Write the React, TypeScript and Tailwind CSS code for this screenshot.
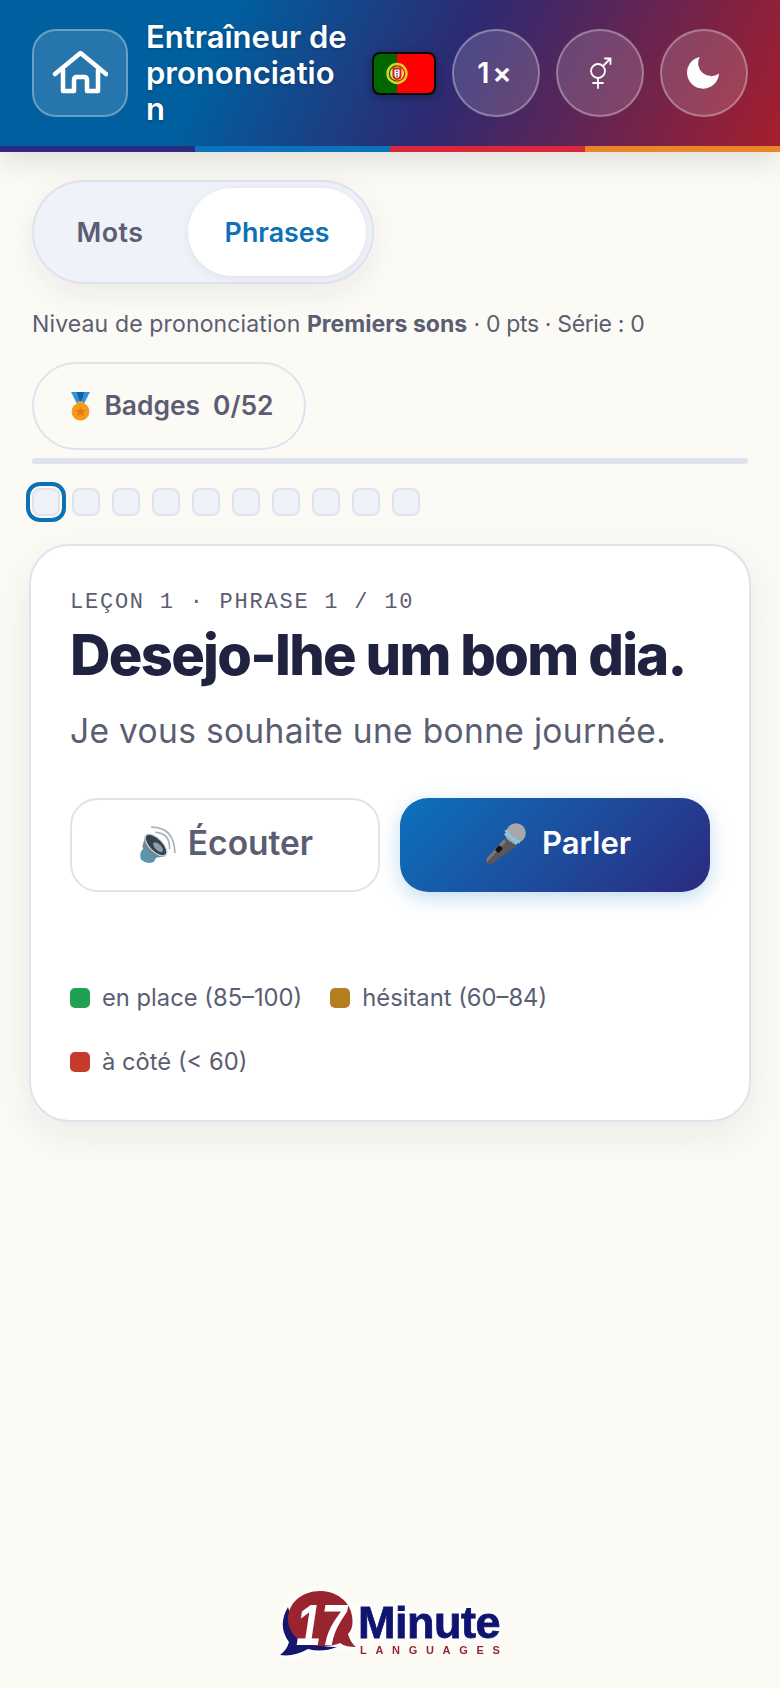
import React from "react";

const FONT = { fontFamily: "Inter, 'Noto Sans', sans-serif" };

// small round header button
const RoundBtn: React.FC<{ children: React.ReactNode }> = ({ children }) => (
  <button className="flex h-[88px] w-[88px] shrink-0 items-center justify-center rounded-full border-2 border-white/30 bg-white/15 text-white">
    {children}
  </button>
);

const HomeIcon = () => (
  <svg width="56" height="46" viewBox="0 0 56 46" fill="none" stroke="white" strokeWidth="4.5" strokeLinecap="round" strokeLinejoin="round">
    <path d="M3 24 L28.5 3 L54 24" />
    <path d="M11 20 V41 H22 V30 Q22 27 25 27 H32 Q35 27 35 30 V41 H46 V20" />
  </svg>
);

const Flag = () => (
  <svg width="64" height="43" viewBox="0 0 64 43" className="shrink-0 drop-shadow-[0_2px_4px_rgba(0,0,0,0.35)]">
    <defs>
      <clipPath id="flagClip">
        <rect x="1" y="1" width="62" height="41" rx="7" />
      </clipPath>
    </defs>
    <g clipPath="url(#flagClip)">
      <rect width="25" height="43" fill="#006600" />
      <rect x="25" width="39" height="43" fill="#ff0000" />
      <circle cx="25" cy="21.5" r="9.5" fill="none" stroke="#d8d42e" strokeWidth="2.4" />
      <circle cx="25" cy="21.5" r="7" fill="#e9e25a" />
      <path d="M20.5 15.5 H29.5 V23.5 Q29.5 27.5 25 28 Q20.5 27.5 20.5 23.5 Z" fill="#d81e1e" />
      <path d="M22.5 17.5 H27.5 V23.5 Q27.5 25.5 25 26 Q22.5 25.5 22.5 23.5 Z" fill="#ffffff" />
      <rect x="24.2" y="18.5" width="1.6" height="1.6" fill="#2a4fa8" />
      <rect x="24.2" y="21" width="1.6" height="1.6" fill="#2a4fa8" />
      <rect x="24.2" y="23.5" width="1.6" height="1.6" fill="#2a4fa8" />
    </g>
    <rect x="1" y="1" width="62" height="41" rx="7" fill="none" stroke="#0a0a0a" strokeWidth="2" />
  </svg>
);

const Moon = () => (
  <svg width="34" height="34" viewBox="0 0 34 34" fill="white">
    <path d="M12.7 1 A16 16 0 1 0 32 17.5 A13 13 0 0 1 12.7 1 Z" />
  </svg>
);

const VenusMars = () => (
  <svg width="24" height="32" viewBox="0 0 24 32" fill="none" stroke="white" strokeWidth="1.8" strokeLinecap="round">
    <circle cx="10" cy="14" r="7" />
    <path d="M10 21 V31 M5 26 H15" />
    <path d="M15 9 L22.5 1.5 M17 1.5 H22.5 V7" />
  </svg>
);

// emoji look-alikes
const Medal = () => (
  <svg width="23" height="30" viewBox="0 0 24 32" className="shrink-0">
    <path d="M2 1 H9 L12 8 L15 1 H22 L15.5 14 H8.5 Z" fill="#2f8fd8" />
    <path d="M8 1 H16 L13 11 H11 Z" fill="#155f9f" />
    <rect x="9" y="11" width="6" height="4" fill="#d8b04a" />
    <circle cx="12" cy="22" r="9.5" fill="#f59a1a" />
    <path d="M12 16.5 L13.6 20.2 L17.5 20.5 L14.5 23 L15.5 26.8 L12 24.8 L8.5 26.8 L9.5 23 L6.5 20.5 L10.4 20.2 Z" fill="#e37a10" />
  </svg>
);

const Speaker = () => (
  <svg width="40" height="40" viewBox="9 12 38 38" fill="none" className="shrink-0">
    <path d="M18 30 L29 40 L25 47 Q18 50 13 45 Q11 41 13 37 Z" fill="#5b96aa" />
    <path d="M17 22 L36 42 L26 43 L14 33 Z" fill="#6a8a98" />
    <ellipse cx="27" cy="31" rx="14" ry="6.8" transform="rotate(45 27 31)" fill="#c9d2d6" />
    <ellipse cx="27" cy="31" rx="12.5" ry="5.6" transform="rotate(45 27 31)" fill="#34444f" />
    <ellipse cx="29" cy="33" rx="6" ry="2.8" transform="rotate(45 29 33)" fill="#8da0aa" />
    <path d="M23 14 Q44 14 45 38" stroke="#aeb2b5" strokeWidth="1.6" strokeLinecap="round" />
    <path d="M27 19 Q40 20 40 34" stroke="#aeb2b5" strokeWidth="1.6" strokeLinecap="round" />
  </svg>
);

const Mic = () => (
  <svg width="44" height="44" viewBox="8 8 44 44" className="shrink-0">
    <path d="M31 22 L42 31 L17 49 Q13 50 11 47 Q10 45 12 43 Z" fill="#56565b" />
    <path d="M29 24 L12 43 Q11 45 12 47 L31 27 Z" fill="#77777c" />
    <path d="M29 19 L33 25 L41 30 L45 26 L34 16 Z" fill="#8fc4da" />
    <circle cx="41" cy="18" r="9.8" fill="#a8a8aa" />
    <path d="M31 15 Q34 24 45 27" stroke="#8fc4da" strokeWidth="3.2" fill="none" />
    <rect x="21.5" y="31" width="5" height="6.5" rx="1" transform="rotate(42 24 34)" fill="#111114" />
  </svg>
);

const Logo = () => (
  <svg width="240" height="74" viewBox="0 0 240 74" className="ml-3 shrink-0 [filter:drop-shadow(0_0_4px_white)_drop-shadow(0_0_4px_white)]">
    <path d="M12 21 Q1 40 13 56 Q11 64 4 69 Q18 71 32 63 Q46 67 61 61 Q22 62 12 21 Z" fill="#15166e" />
    <path d="M44 5 C26 5 12 17 12 33 C12 50 28 61 47 60 C54 60 60 59 64 57 C68 60 74 61 80 61 C76 58 73 52 72 48 C77 43 77 36 76 30 C74 15 60 5 44 5 Z" fill="#98242f" />
    <text transform="translate(20 59) scale(0.78 1)" fontFamily="'Liberation Sans', sans-serif" fontSize="58" fontWeight="700" fontStyle="italic" fill="#ffffff">17</text>
    <text x="82" y="52" fontFamily="'Liberation Sans', sans-serif" fontSize="45" fontWeight="700" fill="#0f1470" stroke="#0f1470" strokeWidth="0.8" letterSpacing="-0.5">Minute</text>
    <text x="84" y="68" fontFamily="'Liberation Sans', sans-serif" fontSize="11" fontWeight="700" fill="#98242f" letterSpacing="8.7">LANGUAGES</text>
  </svg>
);

const Legend: React.FC<{ color: string; label: string }> = ({ color, label }) => (
  <div className="flex items-center gap-3 text-[23.75px] leading-[36px] text-[#5b5e73]">
    <span className={`h-5 w-5 rounded-[5px] ${color}`} />
    <span>{label}</span>
  </div>
);

const App: React.FC = () => {
  const dots = Array.from({ length: 9 });

  return (
    <div className="flex min-h-[1688px] flex-col bg-[#fbfaf4]" style={FONT}>
      {/* header */}
      <header className="relative z-10 shadow-[0_8px_30px_rgba(0,0,0,0.12)]">
        <div className="flex h-[146px] items-center bg-[linear-gradient(115deg,#005f9f_28%,#2d2a72_57%,#a51e2d_100%)] pl-8 pr-8">
          <button className="flex h-[88px] w-[96px] shrink-0 items-center justify-center rounded-[24px] border-2 border-white/30 bg-white/15">
            <HomeIcon />
          </button>
          <h1 className="ml-[18px] w-[204px] shrink-0 text-[31px] font-semibold leading-[36px] text-white [overflow-wrap:anywhere] [text-shadow:0_1px_3px_rgba(0,0,0,0.25)]">
            Entraîneur de prononciation
          </h1>
          <div className="ml-[22px]">
            <Flag />
          </div>
          <div className="ml-4 flex gap-4">
            <RoundBtn>
              <span className="text-[29px] font-semibold tracking-[0.1em]">1×</span>
            </RoundBtn>
            <RoundBtn>
              <VenusMars />
            </RoundBtn>
            <RoundBtn>
              <Moon />
            </RoundBtn>
          </div>
        </div>
        <div className="flex h-1.5">
          <div className="flex-1 bg-[#2d2a7f]" />
          <div className="flex-1 bg-[#0b72bd]" />
          <div className="flex-1 bg-[#d9283c]" />
          <div className="flex-1 bg-[#ea852a]" />
        </div>
      </header>

      {/* main */}
      <main className="flex flex-1 flex-col px-8 pt-7">
        <div className="flex h-[104px] w-[342px] items-center rounded-full border-2 border-[#e0e2ee] bg-[#eff2f9] p-[6px] shadow-[0_10px_30px_rgba(30,34,70,0.07)]">
          <button className="w-[148px] pr-[8px] text-[26.8px] font-semibold tracking-[0.5px] text-[#5b5e73]">Mots</button>
          <button className="h-[88px] w-[178px] rounded-full bg-white text-[26.8px] font-semibold text-[#0b72b5] shadow-[0_2px_8px_rgba(30,34,70,0.08)]">
            Phrases
          </button>
        </div>

        <p className="mt-[23px] text-[23px] leading-[34px] text-[#5b5e73]">
          <span className="tracking-[0.14px]">Niveau de prononciation</span> <strong className="font-bold">Premiers sons</strong>{" "}
          <span className="tracking-[-0.35px]">· 0 pts · Série : 0</span>
        </p>

        <button className="mt-[21px] flex h-[88px] w-[274px] items-center justify-center gap-3 rounded-full border-2 border-[#e0e2ee] pl-[5px] text-[26.4px] font-semibold text-[#5b5e73]">
          <Medal />
          <span>Badges</span>
          <span className="ml-px">0/52</span>
        </button>

        <div className="mt-2 h-1.5 w-[716px] rounded-full bg-[#e0e2ee]" />

        <div className="mt-6 flex gap-3">
          <span className="h-7 w-7 rounded-[8px] border-2 border-[#e0e2ee] bg-[#eff2f9] outline-4 outline-offset-2 outline-[#0b72b5]" />
          {dots.map((_, i) => (
            <span key={i} className="h-7 w-7 rounded-[8px] border-2 border-[#e0e2ee] bg-[#eff2f9]" />
          ))}
        </div>

        {/* lesson card */}
        <section className="-ml-[3px] mt-7 h-[578px] w-[722px] rounded-[40px] border-2 border-[#e0e2ee] bg-white px-[39px] pt-[41px] shadow-[0_14px_40px_rgba(30,34,70,0.07)]">
          <div className="font-['Liberation_Mono',monospace] text-[22px] leading-[32px] tracking-[0.08em] text-[#5b5e73]">
            LEÇON 1 · PHRASE 1 / 10
          </div>
          <h2 className="mt-[2px] text-[56px] font-extrabold leading-[68px] tracking-[-0.03em] text-[#1f2340]">
            Desejo-lhe um bom dia.
          </h2>
          <p className="mt-[18px] text-[33.5px] leading-[48px] tracking-[0.01em] text-[#5b5e73]">
            Je vous souhaite une bonne journée.
          </p>

          <div className="mt-[43px] grid grid-cols-2 gap-5">
            <button className="flex h-[94px] items-center justify-center gap-[11px] rounded-[28px] border-2 border-[#e0e2ee] bg-white text-[33.5px] font-semibold text-[#5b5e73]">
              <Speaker />
              <span className="pb-1">Écouter</span>
            </button>
            <button className="flex h-[94px] items-center justify-center gap-[15px] rounded-[28px] bg-[linear-gradient(135deg,#0b72bd,#2d2a7f)] pl-1 text-[31px] font-semibold text-white shadow-[0_6px_20px_rgba(11,114,189,0.25)]">
              <Mic />
              <span className="pb-1">Parler</span>
            </button>
          </div>

          <div className="mt-[88px] flex flex-wrap gap-x-7 gap-y-7">
            <Legend color="bg-[#1fa055]" label="en place (85–100)" />
            <Legend color="bg-[#b57e1e]" label="hésitant (60–84)" />
            <Legend color="bg-[#c53a2b]" label="à côté (< 60)" />
          </div>
        </section>

        <div className="mt-auto flex justify-center pb-[28px]">
          <Logo />
        </div>
      </main>
    </div>
  );
};

export default App;
